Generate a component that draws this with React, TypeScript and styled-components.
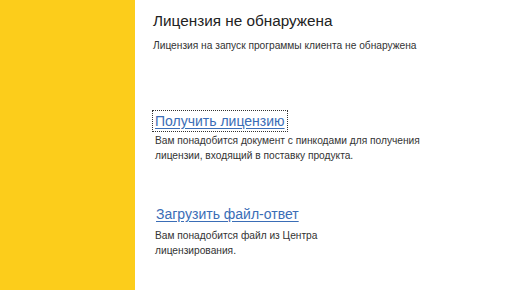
import React from "react";
import styled, { createGlobalStyle } from "styled-components";

const Global = createGlobalStyle`
  html, body { margin: 0; padding: 0; background: #ffffff; }
  body { width: 516px; height: 290px; overflow: hidden; }
`;

const Page = styled.div`
  display: flex;
  width: 516px;
  height: 290px;
  background: #ffffff;
  font-family: "Liberation Sans", Arial, sans-serif;
`;

const Sidebar = styled.div`
  width: 135px;
  flex-shrink: 0;
  background: #fccd1b;
`;

const Content = styled.div`
  display: flex;
  flex-direction: column;
  padding: 11px 0 0 18px;
`;

const Title = styled.h1`
  margin: 0;
  font-size: 15.3px;
  font-weight: normal;
  color: #222222;
  line-height: 20px;
`;

const Subtitle = styled.p`
  margin: 8px 0 0 0;
  font-size: 10.2px;
  line-height: 14px;
  color: #333333;
`;

const Section = styled.div<{ $top: number }>`
  display: flex;
  flex-direction: column;
  align-items: flex-start;
  margin-top: ${(p) => p.$top}px;
`;

const Link = styled.a<{ $focused?: boolean }>`
  font-size: 14px;
  line-height: 18px;
  color: #3a6db6;
  text-decoration: underline;
  text-underline-offset: 2px;
  cursor: pointer;
  padding: 0 1px;
  margin-left: ${(p) => (p.$focused ? 0 : 1)}px;
  outline: ${(p) => (p.$focused ? "1px dotted #333" : "none")};
  border: 1px solid transparent;
`;

const Desc = styled.p<{ $gap: number }>`
  margin: ${(p) => p.$gap}px 0 0 2px;
  font-size: 10.2px;
  line-height: 15px;
  color: #333333;
`;

export default function App() {
  return (
    <>
      <Global />
      <Page>
        <Sidebar />
        <Content>
          <Title>Лицензия не обнаружена</Title>
          <Subtitle>Лицензия на запуск программы клиента не обнаружена</Subtitle>
          <Section $top={58}>
            <Link $focused>Получить лицензию</Link>
            <Desc $gap={2}>
              Вам понадобится документ с пинкодами для получения
              <br />
              лицензии, входящий в поставку продукта.
            </Desc>
          </Section>
          <Section $top={41}>
            <Link>Загрузить файл-ответ</Link>
            <Desc $gap={4}>
              Вам понадобится файл из Центра
              <br />
              лицензирования.
            </Desc>
          </Section>
        </Content>
      </Page>
    </>
  );
}
